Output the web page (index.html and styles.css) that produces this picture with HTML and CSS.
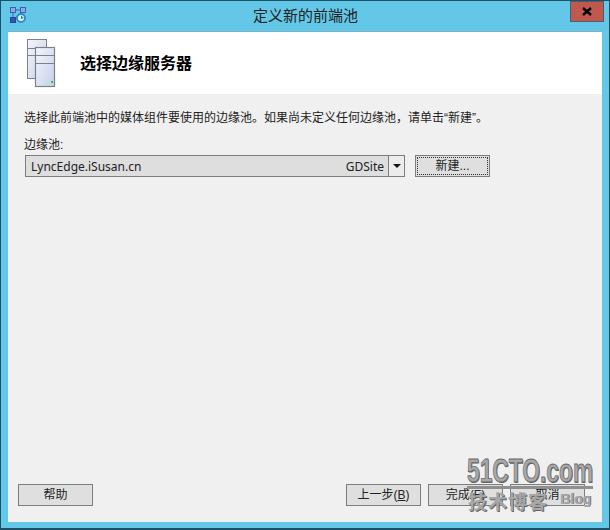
FILE: index.html
```html
<!DOCTYPE html>
<html lang="zh-CN">
<head>
<meta charset="utf-8">
<title>定义新的前端池</title>
<link rel="stylesheet" href="styles.css">
</head>
<body>
<div class="window">
  <div class="titlebar">
    <svg class="app-icon" width="16" height="16" viewBox="0 0 16 16">
      <path d="M3 3L13 3M3 3L3 13M13 3L3 13" stroke="#3a5fb0" stroke-width="1" fill="none"/>
      <rect x="0.5" y="0.5" width="5" height="5" fill="#8fa8e0" stroke="#3d5fae"/>
      <rect x="10.5" y="0.5" width="5" height="5" fill="#8fa8e0" stroke="#3d5fae"/>
      <rect x="0.5" y="10.5" width="5" height="5" fill="#2f56b4" stroke="#27478f"/>
      <circle cx="11" cy="11" r="4" fill="#dff3fb" stroke="#2f8fc4" stroke-width="2"/>
      <path d="M11 8.500l2.500 2.500-2.500 1z" fill="#1d6fa8"/>
    </svg>
    <div class="title">定义新的前端池</div>
    <div class="close">
      <svg width="10" height="9" viewBox="0 0 10 9"><path d="M1 1L9 8M9 1L1 8" stroke="#000" stroke-width="2.4"/></svg>
    </div>
  </div>
  <div class="client">
    <header class="banner">
      <svg class="banner-icon" width="29" height="49" viewBox="0 0 29 49">
        <defs>
          <linearGradient id="g" x1="0" y1="0" x2="1" y2="1">
            <stop offset="0" stop-color="#f4f6fc"/><stop offset="1" stop-color="#c6d0ea"/>
          </linearGradient>
        </defs>
        <g stroke="#7d8289" fill="url(#g)">
          <rect x="0.500" y="0.500" width="19" height="39"/>
          <path d="M1 9.500H19M1 16.500H19" fill="none"/>
          <rect x="8.500" y="8.500" width="19" height="39" stroke-width="1.200"/>
          <path d="M9 16.500H27M9 24.500H27" fill="none"/>
        </g>
        <rect x="24" y="42" width="2" height="2" fill="#2cc84a"/>
      </svg>
      <h1 class="banner-title">选择边缘服务器</h1>
    </header>
    <main class="body">
      <p class="intro">选择此前端池中的媒体组件要使用的边缘池。如果尚未定义任何边缘池，请单击“新建”。</p>
      <label class="field-label">边缘池:</label>
      <div class="field-row">
        <div class="combo">
          <span class="combo-value">LyncEdge.iSusan.cn</span>
          <span class="combo-site">GDSite</span>
          <span class="combo-arrow"><i class="arrow"></i></span>
        </div>
        <button class="btn btn-new"><span class="focus">新建...</span></button>
      </div>
    </main>
    <footer class="footer">
      <button class="btn">帮助</button>
      <div class="footer-right">
        <button class="btn">上一步(<u>B</u>)</button>
        <button class="btn">完成(F)</button>
        <button class="btn">取消</button>
      </div>
    </footer>
  </div>
  <div class="watermark">
    <div class="wm-main">51CTO.com</div>
    <div class="wm-line"></div>
    <div class="wm-sub"><span class="wm-cn">技术博客</span><span class="wm-blog">Blog</span></div>
  </div>
</div>
</body>
</html>
```
FILE: styles.css
```css
* { box-sizing: border-box; }
html, body { margin: 0; padding: 0; }
body { width: 610px; height: 530px; overflow: hidden; font-family: "Liberation Sans", "Noto Sans CJK SC", sans-serif; font-size: 12px; color: #1a1a1a; }
.window { position: relative; width: 610px; height: 530px; background: #63c8e8; border: 1px solid #1d4f66; border-bottom-width: 2px; padding: 0 7px 6px; display: flex; flex-direction: column; }
.titlebar { height: 30px; flex: none; display: flex; position: relative; }
.app-icon { position: absolute; left: 2px; top: 6px; }
.title { flex: 1; text-align: center; line-height: 30px; font-size: 15px; color: #222; padding-left: 1px; }
.close { position: absolute; right: -2px; top: 0; width: 34px; height: 21px; background: #c0584e; border: 1px solid #4f5d66; display: flex; align-items: center; justify-content: center; }
.client { flex: 1; display: flex; flex-direction: column; background: #f0f0f0; border-top: 1px solid #7fb2c6; }
.banner { height: 62px; background: #fff; display: flex; align-items: flex-start; flex: none; padding-left: 19px; }
.banner-icon { margin-top: 7px; }
.banner-title { margin: 20px 0 0 24px; font-size: 16px; line-height: 24px; font-weight: 700; color: #000; }
.body { flex: 1; padding: 15px 16px 0; }
.intro { margin: 0; line-height: 18px; color: #222; }
.field-label { display: block; margin-top: 9px; line-height: 18px; color: #222; }
.field-row { display: flex; align-items: flex-start; gap: 10px; margin-top: 1px; }
.combo { width: 380px; height: 22px; margin-left: 1px; background: #dedede; border: 1px solid #7d7d7d; display: flex; align-items: center; padding-left: 5px; font-family: "Noto Sans", sans-serif; font-size: 12px; color: #222; }
.combo-value { flex: 1; }
.combo-site { margin-right: 4px; }
.combo-arrow { width: 16px; height: 20px; background: #ececec; border-left: 1px solid #7d7d7d; display: flex; align-items: center; justify-content: center; }
.arrow { width: 0; height: 0; border-left: 4px solid transparent; border-right: 4px solid transparent; border-top: 4px solid #111; }
.btn { width: 75px; height: 22px; background: #dfdfdf; border: 1px solid #7d7d7d; padding: 0; font: inherit; color: #222; display: flex; align-items: center; justify-content: center; line-height: 16px; }
.btn-new { padding: 1px; }
.focus { flex: 1; align-self: stretch; border: 1px dotted #333; display: flex; align-items: center; justify-content: center; }
.footer { flex: none; display: flex; justify-content: space-between; padding: 0 17px 16px 10px; }
.footer-right { display: flex; gap: 7px; }
.watermark { position: absolute; left: 466px; top: 455px; width: 126px; pointer-events: none; color: #8d8d8d; }
.wm-main { font-family: "Liberation Sans", sans-serif; font-weight: 700; font-size: 33px; line-height: 30px; transform: scaleX(0.69); transform-origin: left top; white-space: nowrap; color: #a8a8a8; -webkit-text-stroke: 0.8px #6a6a6a; text-shadow: 1px 1px 0 #5f5f5f; }
.wm-line { height: 3px; background: #8f8f8f; }
.wm-sub { display: flex; align-items: flex-start; justify-content: space-between; margin-left: 1px; }
.wm-cn { font-family: "Noto Sans CJK SC", sans-serif; font-size: 19px; line-height: 24px; letter-spacing: 1px; font-weight: 700; color: #a6a6a6; text-shadow: 1px 1px 0 #666; }
.wm-blog { font-family: "Liberation Sans", sans-serif; font-size: 14px; font-weight: 700; line-height: 16px; margin: 2px 2px 0 0; color: #a8a8a8; text-shadow: 1px 0 0 #7a7a7a; }
```
